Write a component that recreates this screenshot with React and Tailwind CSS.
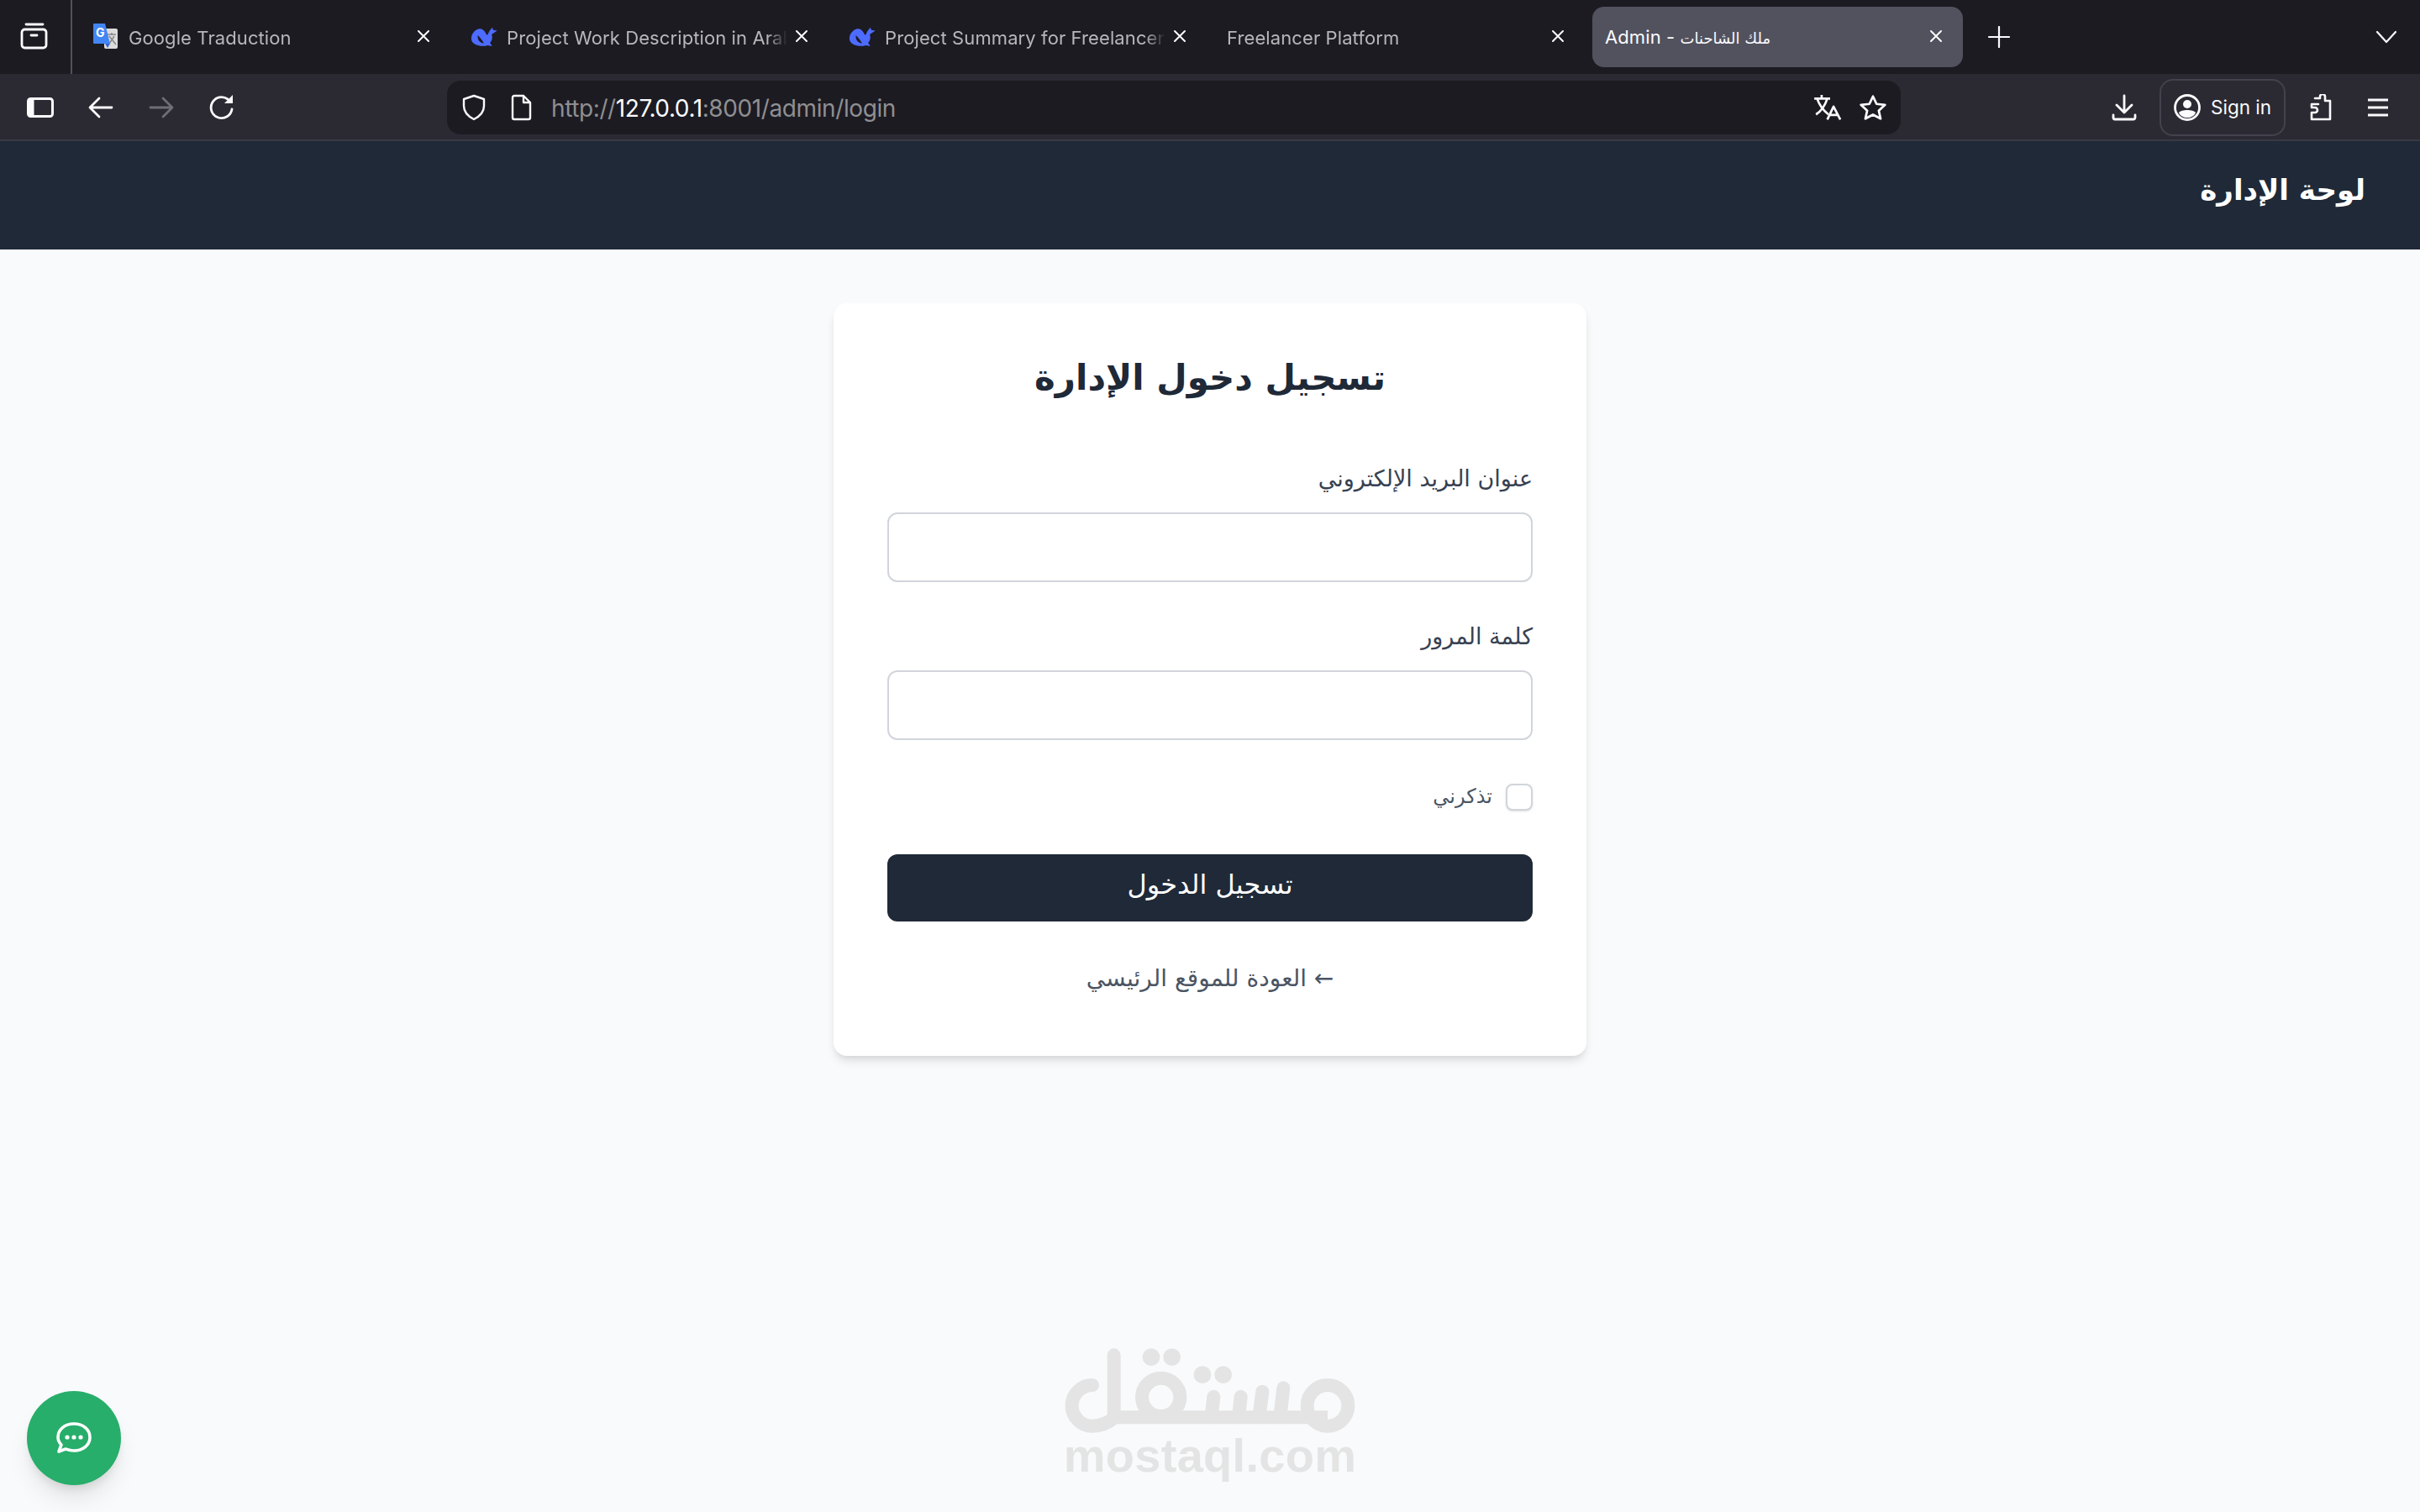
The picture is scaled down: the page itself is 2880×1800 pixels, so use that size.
import React from "react";

const ar = { fontFamily: "'DejaVu Sans', sans-serif" };
const ui = "font-['Inter',sans-serif]";

function X({ className = "" }) {
  return (
    <svg width="16" height="16" viewBox="0 0 16 16" className={className} fill="none" stroke="#fbfbfe" strokeWidth="2" strokeLinecap="round">
      <path d="M2 2 L14 14 M14 2 L2 14" />
    </svg>
  );
}

function GoogleIcon() {
  return (
    <svg width="32" height="32" viewBox="0 0 32 32" className="shrink-0">
      <rect x="14" y="6" width="16" height="24" rx="2" fill="#dcdcdc" />
      <path d="M18 13 L28 13 M23 11 L23 14 M20 24 L26 15 M20 15 L28 25" stroke="#8a8a8a" strokeWidth="1.600" fill="none" />
      <path d="M2 0 H15 L21 24 H2 a1 1 0 0 1 -1 -1 V1 a1 1 0 0 1 1 -1 Z" fill="#4285f4" />
      <path d="M15 24 L21 24 L18 29 Z" fill="#3367d6" />
      <text x="4" y="16" fontSize="14" fontWeight="700" fill="#fff" fontFamily="Inter, sans-serif">G</text>
    </svg>
  );
}

function WhaleIcon() {
  return (
    <svg width="33" height="26" viewBox="30 35 100 72" className="shrink-0">
      <path fill="#4d6bfe" d="M58 42 C40 48 29 68 34 85 C42 102 70 108 92 101 L108 104 L100 92 C108 84 110 72 106 62 L126 48 L112 46 L108 37 L98 50 L92 62 C90 66 87 63 84 56 C78 44 68 39 58 42 Z" />
      <path fill="#1c1b22" d="M56 65 C54 80 62 92 78 94 C72 82 64 72 56 65 Z" />
    </svg>
  );
}

function Tab({ title, icon, active }) {
  return (
    <div className={`relative flex items-center w-[441px] h-[72px] mr-[9px] pl-[15px] rounded-[14px] ${active ? "bg-[#52525e]" : ""}`}>
      {icon && <div className="flex items-center w-[32px] h-[32px] mr-[11px] shrink-0">{icon}</div>}
      <div className={`w-[334px] mt-[1px] shrink-0 whitespace-nowrap text-[22px] tracking-[0.1px] leading-[32px] ${active ? "text-[#fbfbfe]" : "text-[#b7b7ba] [mask-image:linear-gradient(to_right,black_calc(100%-24px),transparent)]"}`}>
        {title}
      </div>
      <X className="absolute left-[401px] top-[27px]" />
    </div>
  );
}

function TabBar() {
  return (
    <div className={`flex items-center h-[88px] bg-[#1c1b22] ${ui}`}>
      <div className="flex items-center justify-center w-[86px] h-full border-r-2 border-[#52525e] shrink-0">
        <svg width="34" height="34" viewBox="0 0 34 34" fill="none" stroke="#fbfbfe" strokeWidth="2.800" strokeLinecap="round" strokeLinejoin="round" className="mr-[3px]">
          <path d="M7 2 h20" />
          <rect x="2" y="8" width="29" height="22" rx="3.500" />
          <path d="M13 15 h7" />
        </svg>
      </div>
      <div className="w-[9px] shrink-0" />
      <Tab title="Google Traduction" icon={<GoogleIcon />} />
      <Tab title="Project Work Description in Arab" icon={<WhaleIcon />} />
      <Tab title="Project Summary for Freelancer" icon={<WhaleIcon />} />
      <Tab title="Freelancer Platform" />
      <Tab active title={<span>Admin - <span style={ar} className="text-[18px]">ملك الشاحنات</span></span>} />
      <div className="w-[21px] shrink-0" />
      <svg width="26" height="26" viewBox="0 0 26 26" stroke="#fbfbfe" strokeWidth="2.200" strokeLinecap="round"><path d="M13 1 V25 M1 13 H25" /></svg>
      <div className="flex-1" />
      <svg width="26" height="16" viewBox="0 0 26 16" fill="none" stroke="#fbfbfe" strokeWidth="2.200" strokeLinecap="round" strokeLinejoin="round" className="mr-[27px]"><path d="M2 2 L13 14 L24 2" /></svg>
    </div>
  );
}

const Stroke = ({ w = 32, h = 32, vb = "0 0 32 32", color = "#fbfbfe", sw = 2.800, children, className = "" }) => (
  <svg width={w} height={h} viewBox={vb} fill="none" stroke={color} strokeWidth={sw} strokeLinecap="round" strokeLinejoin="round" className={`shrink-0 ${className}`}>{children}</svg>
);

function Toolbar() {
  return (
    <div className={`flex items-center h-[80px] pt-[2px] bg-[#2b2a33] border-b-2 border-[#3a3944] ${ui}`}>
      <div className="flex items-center w-[532px] shrink-0 pl-[32px]">
        <svg width="32" height="24" viewBox="0 0 32 24" className="shrink-0">
          <rect x="1.500" y="1.500" width="29" height="21" rx="3" fill="none" stroke="#fbfbfe" strokeWidth="3" />
          <rect x="1.500" y="1.500" width="7" height="21" fill="#fbfbfe" />
        </svg>
        <Stroke className="ml-[40px]"><path d="M29 16 H4 M14 5 L3 16 L14 27" /></Stroke>
        <Stroke className="ml-[40px]" color="#6f6e75"><path d="M3 16 H28 M18 5 L29 16 L18 27" /></Stroke>
        <Stroke className="ml-[41px]">
          <path d="M27 18 A12.500 12.500 0 1 1 22 6" />
          <path d="M28 1 V11 H18 Z" fill="#fbfbfe" stroke="none" />
        </Stroke>
      </div>
      <div className="flex items-center w-[1730px] h-[64px] rounded-[16px] bg-[#1c1b22] shrink-0">
        <Stroke className="ml-[16px]" sw={2.400}><path d="M16 2 L28 6 V14 C28 22 22 27 16 30 C10 27 4 22 4 14 V6 Z" /></Stroke>
        <Stroke className="ml-[24px]" sw={2.400}><path d="M6 4 a2 2 0 0 1 2 -2 H19 L27 10 V28 a2 2 0 0 1 -2 2 H8 a2 2 0 0 1 -2 -2 Z M19 2 V10 H27" /></Stroke>
        <div className="ml-[20px] mt-[1px] text-[28px] leading-[40px] tracking-[-0.4px] text-[#8f8f92] whitespace-nowrap">
          http://<span className="text-[#fbfbfe]">127.0.0.1</span>:8001/admin/login
        </div>
        <div className="flex-1" />
        <Stroke w={34} h={32} vb="0 0 100 95" sw={8}>
          <path d="M0 16 H56 M26 3 V16 M10 16 C18 40 32 58 50 72 M46 16 C38 40 22 62 6 72" strokeLinecap="butt" />
          <path d="M46 90 L68 44 L92 90 M54 74 H84" strokeLinecap="butt" />
        </Stroke>
        <Stroke className="ml-[19px] mr-[16px]" w={34} h={34} sw={2.600}><path d="M16 3.500 L20 12 L29.500 13 L22.500 19.500 L24.500 28.500 L16 24 L7.500 28.500 L9.500 19.500 L2.500 13 L12 12 Z" /></Stroke>
      </div>
      <div className="flex items-center flex-1">
        <Stroke className="ml-[250px]"><path d="M16 2 V22 M7 13 L16 22 L25 13 M3 25 V28 a2 2 0 0 0 2 2 H27 a2 2 0 0 0 2 -2 V25" /></Stroke>
        <div className="flex items-center ml-[26px] w-[150px] h-[68px] rounded-[16px] border-2 border-[#43424d] pl-[15px]">
          <svg width="32" height="32" viewBox="0 0 32 32" className="shrink-0">
            <circle cx="16" cy="16" r="14.500" fill="none" stroke="#fbfbfe" strokeWidth="2.800" />
            <circle cx="16" cy="12" r="5" fill="#fbfbfe" />
            <path d="M6 22 C9 18 23 18 26 22 C23 30 9 30 6 22 Z" fill="#fbfbfe" />
          </svg>
          <span className="ml-[12px] text-[22.500px] leading-[32px] text-[#fbfbfe] whitespace-nowrap">Sign in</span>
        </div>
        <Stroke className="ml-[25px]" sw={2.600}><path d="M10 5 H16 V3 a3 3 0 0 1 6 0 V8 H28 V30 H6 V22 H10 a3 3 0 0 0 0 -6 H6 V12 H14" /></Stroke>
        <Stroke className="ml-[40px]" w={26} h={28} vb="0 0 26 28" sw={3}><path d="M1 5 H25 M1 14 H25 M1 23 H25" strokeLinecap="butt" /></Stroke>
      </div>
    </div>
  );
}

function Logo() {
  return (
    <div className="absolute left-[1200px] top-[1560px] w-[480px] h-[240px]">
      <svg width="480" height="240" viewBox="0 0 1440 720" fill="none" stroke="#e4e4e4" strokeWidth="48" strokeLinecap="round" aria-hidden="true">
        <circle cx="1140" cy="340" r="73" />
        <path d="M380 382 H1140" strokeLinecap="butt" />
        <path d="M377 160 V382" />
        <path d="M300 267 A73 73 0 1 0 300 413 Q345 413 380 382" />
        <circle cx="545" cy="310" r="68" />
        <path d="M733 308 L725 382 M830 308 L822 382 M907 290 L895 382 M982 277 L970 382" />
        <g fill="#e4e4e4" stroke="none">
          <circle cx="510" cy="167" r="31" />
          <circle cx="584" cy="167" r="31" />
          <circle cx="693" cy="230" r="31" />
          <circle cx="767" cy="230" r="31" />
        </g>
      </svg>
      <div className="absolute left-[64px] top-[141px] w-[352px] text-center font-['Liberation_Sans',sans-serif] font-bold text-[56px] leading-[64px] tracking-[0.3px] text-[#e4e4e4] whitespace-nowrap">mostaql.com</div>
    </div>
  );
}

function ChatButton() {
  return (
    <div className="absolute left-[32px] top-[1656px] flex items-center justify-center w-[112px] h-[112px] rounded-full bg-[#27ae6a] shadow-[0_20px_30px_-6px_rgba(0,0,0,0.1),0_8px_12px_-4px_rgba(0,0,0,0.1)]">
      <svg width="42" height="38" viewBox="0 0 42 38" fill="none" stroke="#fff" strokeWidth="3.600" strokeLinejoin="round">
        <path d="M21 2 C32 2 40 9 40 18 C40 27 32 34 21 34 C17 34 14 33 11 32 L3 35 L6 27 C3 24 2 21 2 18 C2 9 10 2 21 2 Z" />
        <g fill="#fff" stroke="none">
          <circle cx="13" cy="18" r="2.600" />
          <circle cx="21" cy="18" r="2.600" />
          <circle cx="29" cy="18" r="2.600" />
        </g>
      </svg>
    </div>
  );
}

function Field({ label, className = "" }) {
  return (
    <div className={className}>
      <label className="block mb-[20px] -mt-[2px] pb-[2px] text-[27px] leading-[36px] text-[#374151]">{label}</label>
      <input className="block w-full h-[83px] rounded-[12px] border-2 border-[#d1d5db] bg-white" />
    </div>
  );
}

function Card() {
  return (
    <div dir="rtl" style={ar} className="w-[896px] mx-auto mt-[64px] px-[64px] pt-[57px] pb-[72px] rounded-[16px] bg-white shadow-[0_8px_12px_-2px_rgba(0,0,0,0.1),0_4px_8px_-4px_rgba(0,0,0,0.1)]">
      <h1 className="mb-[72px] text-center text-[42px] leading-[64px] font-bold text-[#1f2937]">تسجيل دخول الإدارة</h1>
      <Field label="عنوان البريد الإلكتروني" className="mb-[49px]" />
      <Field label="كلمة المرور" className="mb-[48px]" />
      <div className="flex items-center h-[40px] mb-[48px]">
        <input type="checkbox" className="appearance-none w-[32px] h-[32px] rounded-[8px] border-2 border-[#d1d5db] bg-white shadow-sm" />
        <span className="mr-[16px] text-[24px] leading-[36px] pb-[2px] text-[#4b5563]">تذكرني</span>
      </div>
      <button className="block w-full h-[80px] pb-[8px] rounded-[12px] bg-[#1f2937] text-[32px] text-white">تسجيل الدخول</button>
      <div className="mt-[48px] text-center text-[28px] leading-[40px] text-[#4b5563]">← العودة للموقع الرئيسي</div>
    </div>
  );
}

export default function App() {
  return (
    <div className="relative h-screen overflow-hidden bg-[#f9fafb]">
      <TabBar />
      <Toolbar />
      <header dir="rtl" style={ar} className="flex items-center h-[129px] pr-[65px] pb-[12px] bg-[#1f2937] text-white text-[34px] font-bold">لوحة الإدارة</header>
      <Card />
      <Logo />
      <ChatButton />
    </div>
  );
}
